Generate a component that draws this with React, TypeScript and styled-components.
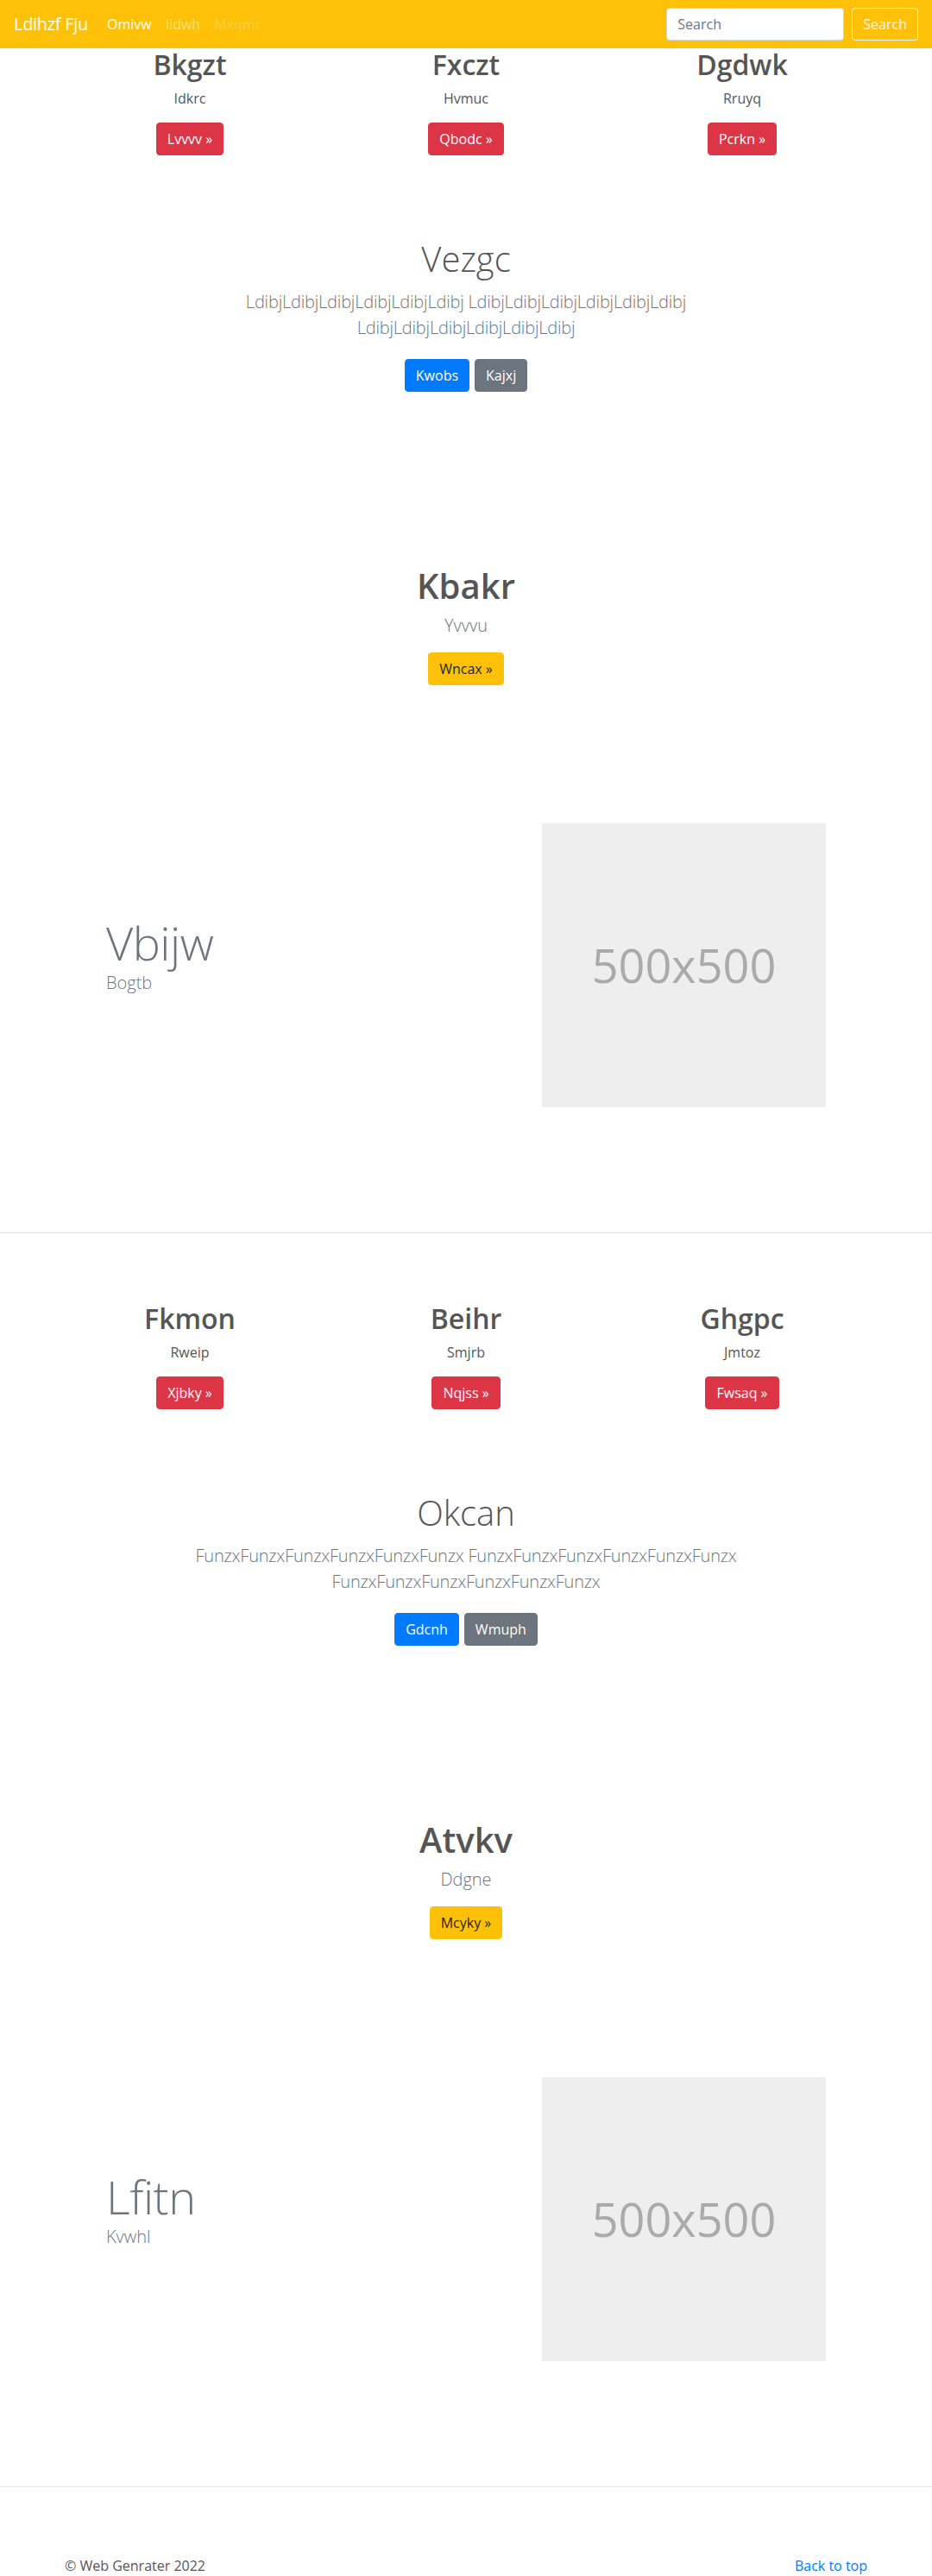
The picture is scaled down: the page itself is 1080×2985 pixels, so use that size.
import React from "react";
import styled, { createGlobalStyle } from "styled-components";

const GlobalStyle = createGlobalStyle`
  html { overflow: hidden; }
  * { box-sizing: border-box; }
  body {
    margin: 0;
    font-family: "Open Sans", "Noto Sans", "Liberation Sans", sans-serif;
    font-size: 16px;
    line-height: 1.5;
    color: #555;
    background: #fff;
  }
`;

type Variant = "danger" | "primary" | "secondary" | "warning";

const palette: Record<Variant, { bg: string; fg: string }> = {
  danger: { bg: "#dc3545", fg: "#fff" },
  primary: { bg: "#007bff", fg: "#fff" },
  secondary: { bg: "#6c757d", fg: "#fff" },
  warning: { bg: "#ffc107", fg: "#212529" },
};

const Navbar = styled.nav`
  height: 56px;
  background: #ffc107;
  display: flex;
  align-items: center;
  padding: 0 16px;
`;

const Brand = styled.a`
  font-size: 20px;
  line-height: 30px;
  color: #fff;
  margin-right: 14px;
  letter-spacing: -0.3px;
  text-decoration: none;
`;

const NavList = styled.ul`
  display: flex;
  list-style: none;
  margin: 0;
  padding: 0;
`;

type LinkState = "active" | "normal" | "disabled";
const linkColor: Record<LinkState, string> = {
  active: "#fff",
  normal: "rgba(255,255,255,0.5)",
  disabled: "rgba(255,255,255,0.25)",
};

const NavLink = styled.a<{ $state: LinkState }>`
  display: block;
  padding: 8px;
  font-size: 16px;
  line-height: 24px;
  color: ${(p) => linkColor[p.$state]};
  text-decoration: none;
`;

const SearchForm = styled.form`
  margin-left: auto;
  display: flex;
  align-items: center;
`;

const SearchInput = styled.input`
  width: 206px;
  height: 38px;
  margin-right: 9px;
  padding: 6px 12px;
  font-family: inherit;
  font-size: 16px;
  line-height: 24px;
  color: #495057;
  background: #fff;
  border: 1px solid #ced4da;
  border-radius: 4px;
  &::placeholder {
    color: #6c757d;
  }
`;

const OutlineButton = styled.button`
  height: 38px;
  padding: 6px 12px;
  font-family: inherit;
  font-size: 16px;
  line-height: 24px;
  color: #f8f9fa;
  background: transparent;
  border: 1px solid #f8f9fa;
  border-radius: 4px;
`;

const Container = styled.div`
  max-width: 960px;
  margin: 0 auto;
  padding: 0 15px;
`;

const Block = styled.section<{ $first?: boolean }>`
  padding-top: ${(p) => (p.$first ? 0 : 80)}px;
  padding-bottom: 144.6px;
`;

const Divider = styled.hr`
  margin: 0;
  border: 0;
  border-top: 1px solid rgba(0, 0, 0, 0.1);
`;

const CardRow = styled.div`
  display: grid;
  grid-template-columns: repeat(3, 1fr);
  margin: 0 -15px;
`;

const Card = styled.div`
  padding: 0 15px;
  text-align: center;
`;

const CardTitle = styled.h2`
  margin: 0 0 8px;
  font-size: 32px;
  font-weight: 600;
  line-height: 38.4px;
  color: #555;
`;

const CardText = styled.p`
  margin: 0 0 16px;
  font-size: 16px;
  line-height: 24px;
  color: #555;
`;

const Button = styled.a<{ $variant: Variant }>`
  display: inline-block;
  padding: 6px 12px;
  font-size: 16px;
  line-height: 24px;
  border: 1px solid ${(p) => palette[p.$variant].bg};
  border-radius: 4px;
  background: ${(p) => palette[p.$variant].bg};
  color: ${(p) => palette[p.$variant].fg};
  text-decoration: none;
`;

const Jumbotron = styled.div`
  padding-top: 96px;
  text-align: center;
`;

const JumboTitle = styled.h1`
  margin: 0 0 11px;
  font-size: 40px;
  font-weight: 300;
  line-height: 48px;
  color: #555;
`;

const Lead = styled.p`
  max-width: 680px;
  margin: 0 auto 21px;
  font-size: 20px;
  font-weight: 300;
  line-height: 30px;
  letter-spacing: -0.2px;
  color: #6c757d;
`;

const ButtonGroup = styled.div`
  display: flex;
  justify-content: center;
  gap: 6px;
`;

const Hero = styled.div`
  margin-top: 201px;
  text-align: center;
`;

const HeroTitle = styled.h1`
  margin: 0 0 7px;
  font-size: 40px;
  font-weight: 600;
  line-height: 48px;
  color: #555;
`;

const HeroLead = styled.p`
  margin: 0 0 16px;
  font-size: 20px;
  font-weight: 300;
  line-height: 30px;
  color: #6c757d;
`;

const Featurette = styled.div`
  margin: 160px -15px 0;
  display: grid;
  grid-template-columns: 1fr 1fr;
  align-items: center;
`;

const FeatureText = styled.div`
  padding: 0 63px;
`;

const FeatureTitle = styled.h2`
  margin: 0;
  font-size: 54px;
  font-weight: 300;
  line-height: 64.8px;
  letter-spacing: -0.5px;
  color: #6c757d;
`;

const FeatureLead = styled.p`
  margin: 0 0 24px;
  font-size: 20px;
  font-weight: 300;
  line-height: 30px;
  color: #6c757d;
`;

const FeatureMedia = styled.div`
  padding: 0 63px;
  display: flex;
  justify-content: flex-end;
`;

const Placeholder = styled.div`
  width: 329px;
  height: 329px;
  background: #eee;
  color: #aaa;
  display: flex;
  align-items: center;
  justify-content: center;
  font-size: 54px;
  font-weight: 400;
`;

const Footer = styled.footer`
  padding-top: 79px;
`;

const FooterRow = styled.div`
  display: flex;
  justify-content: space-between;
  font-size: 16px;
  line-height: 24px;
`;

const FooterText = styled.p`
  margin: 0;
  color: #555;
`;

const BackLink = styled.a`
  color: #007bff;
  text-decoration: none;
`;

type CardData = { title: string; text: string; btn: string };
type BlockData = {
  cards: CardData[];
  jumbo: { title: string; word: string; primary: string; secondary: string };
  hero: { title: string; lead: string; btn: string };
  feature: { title: string; lead: string };
};

const blocks: BlockData[] = [
  {
    cards: [
      { title: "Bkgzt", text: "Idkrc", btn: "Lvvvv" },
      { title: "Fxczt", text: "Hvmuc", btn: "Qbodc" },
      { title: "Dgdwk", text: "Rruyq", btn: "Pcrkn" },
    ],
    jumbo: { title: "Vezgc", word: "Ldibj", primary: "Kwobs", secondary: "Kajxj" },
    hero: { title: "Kbakr", lead: "Yvvvu", btn: "Wncax" },
    feature: { title: "Vbijw", lead: "Bogtb" },
  },
  {
    cards: [
      { title: "Fkmon", text: "Rweip", btn: "Xjbky" },
      { title: "Beihr", text: "Smjrb", btn: "Nqjss" },
      { title: "Ghgpc", text: "Jmtoz", btn: "Fwsaq" },
    ],
    jumbo: { title: "Okcan", word: "Funzx", primary: "Gdcnh", secondary: "Wmuph" },
    hero: { title: "Atvkv", lead: "Ddgne", btn: "Mcyky" },
    feature: { title: "Lfitn", lead: "Kvwhl" },
  },
];

const leadText = (w: string) => {
  const g = w.repeat(6);
  return `${g} ${g} ${g}`;
};

const ContentBlock: React.FC<{ data: BlockData; first?: boolean }> = ({ data, first }) => (
  <Block $first={first}>
    <Container>
      <CardRow>
        {data.cards.map((c) => (
          <Card key={c.title}>
            <CardTitle>{c.title}</CardTitle>
            <CardText>{c.text}</CardText>
            <Button $variant="danger" href="#">
              {c.btn} &raquo;
            </Button>
          </Card>
        ))}
      </CardRow>
      <Jumbotron>
        <JumboTitle>{data.jumbo.title}</JumboTitle>
        <Lead>{leadText(data.jumbo.word)}</Lead>
        <ButtonGroup>
          <Button $variant="primary" href="#">
            {data.jumbo.primary}
          </Button>
          <Button $variant="secondary" href="#">
            {data.jumbo.secondary}
          </Button>
        </ButtonGroup>
      </Jumbotron>
      <Hero>
        <HeroTitle>{data.hero.title}</HeroTitle>
        <HeroLead>{data.hero.lead}</HeroLead>
        <Button $variant="warning" href="#">
          {data.hero.btn} &raquo;
        </Button>
      </Hero>
      <Featurette>
        <FeatureText>
          <FeatureTitle>{data.feature.title}</FeatureTitle>
          <FeatureLead>{data.feature.lead}</FeatureLead>
        </FeatureText>
        <FeatureMedia>
          <Placeholder>500x500</Placeholder>
        </FeatureMedia>
      </Featurette>
    </Container>
  </Block>
);

export default function App() {
  return (
    <>
      <GlobalStyle />
      <Navbar>
        <Brand href="#">Ldihzf Fju</Brand>
        <NavList>
          <li>
            <NavLink $state="active" href="#">
              Omivw
            </NavLink>
          </li>
          <li>
            <NavLink $state="normal" href="#">
              Iidwh
            </NavLink>
          </li>
          <li>
            <NavLink $state="disabled" href="#">
              Mxqmr
            </NavLink>
          </li>
        </NavList>
        <SearchForm onSubmit={(e) => e.preventDefault()}>
          <SearchInput type="search" placeholder="Search" aria-label="Search" />
          <OutlineButton type="submit">Search</OutlineButton>
        </SearchForm>
      </Navbar>
      <main>
        <ContentBlock data={blocks[0]} first />
        <Divider />
        <ContentBlock data={blocks[1]} />
        <Divider />
      </main>
      <Footer>
        <Container>
          <FooterRow>
            <FooterText>&copy; Web Genrater 2022</FooterText>
            <BackLink href="#">Back to top</BackLink>
          </FooterRow>
        </Container>
      </Footer>
    </>
  );
}
